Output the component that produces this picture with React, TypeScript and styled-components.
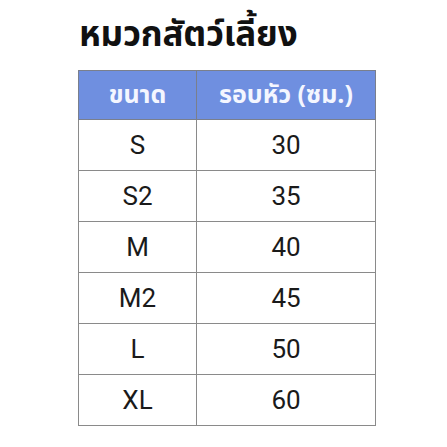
import styled, { createGlobalStyle } from "styled-components";

const GlobalStyle = createGlobalStyle`
  html, body {
    margin: 0;
    padding: 0;
    background: #ffffff;
  }
  body {
    font-family: "Noto Sans Thai", "Noto Sans", Roboto, sans-serif;
  }
`;

const Page = styled.div`
  width: 447px;
  height: 447px;
  box-sizing: border-box;
  padding: 12px 0 0 78px;
  background: #fff;
`;

const Title = styled.h1`
  margin: 0 0 10px 1px;
  font-size: 35px;
  font-weight: 700;
  line-height: 48px;
  color: #111;
  letter-spacing: -0.2px;
`;

const Table = styled.table`
  width: 295px;
  border-collapse: collapse;
  table-layout: fixed;
`;

const HeadCell = styled.th<{ $w: number }>`
  width: ${(p) => p.$w}px;
  height: 48px;
  padding: 0;
  background: #6f8fe0;
  color: #f4f6ff;
  font-size: 25px;
  font-weight: 700;
  border: 1.5px solid #7a7f8c;
  text-align: center;
`;

const Cell = styled.td`
  height: 50px;
  padding: 0;
  font-family: Roboto, "Open Sans", sans-serif;
  font-size: 26px;
  color: #1a1a1a;
  text-align: center;
  border: 1.5px solid #8a8a8a;
`;

const rows: [string, string][] = [
  ["S", "30"],
  ["S2", "35"],
  ["M", "40"],
  ["M2", "45"],
  ["L", "50"],
  ["XL", "60"],
];

export default function App() {
  return (
    <Page>
      <GlobalStyle />
      <Title>หมวกสัตว์เลี้ยง</Title>
      <Table>
        <thead>
          <tr>
            <HeadCell $w={117}>ขนาด</HeadCell>
            <HeadCell $w={178}>รอบหัว (ซม.)</HeadCell>
          </tr>
        </thead>
        <tbody>
          {rows.map(([size, head]) => (
            <tr key={size}>
              <Cell>{size}</Cell>
              <Cell>{head}</Cell>
            </tr>
          ))}
        </tbody>
      </Table>
    </Page>
  );
}
